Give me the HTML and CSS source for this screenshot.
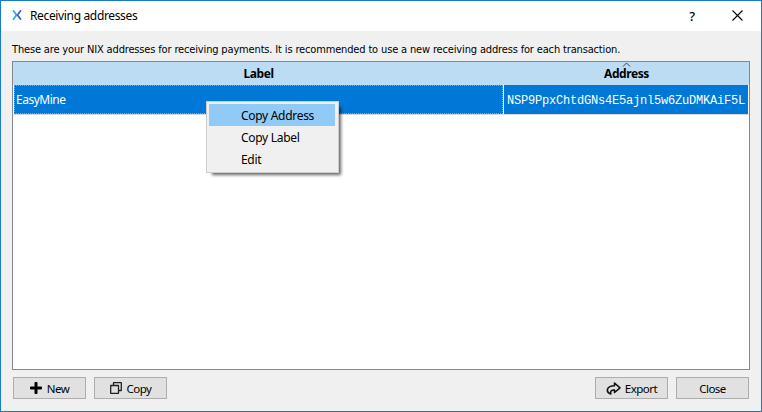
FILE: index.html
```html
<!DOCTYPE html>
<html lang="en">
<head>
<meta charset="utf-8">
<title>Receiving addresses</title>
<link rel="stylesheet" href="styles.css">
</head>
<body>
<main class="window">
  <header class="titlebar">
    <svg class="logo" width="10" height="10" viewBox="0 0 10 10" fill="none" stroke-width="1.7">
      <path d="M1 .3 4 4.2Q4.7 5 4 5.8L1 9.7" stroke="#29a4ee"/>
      <path d="M9 .3 6 4.2Q5.3 5 6 5.8L9 9.7" stroke="#4054d5"/>
    </svg>
    <h1 class="title">Receiving addresses</h1>
    <span class="help">?</span>
    <svg class="dismiss" width="11" height="11" viewBox="0 0 11 11" stroke="#000" stroke-width="1.1"><path d="M.5.5l10 10M10.500.5l-10 10"/></svg>
  </header>
  <p class="intro">These are your NIX addresses for receiving payments. It is recommended to use a new receiving address for each transaction.</p>
  <section class="table">
    <div class="head">
      <div class="col-label"><b class="head-label">Label</b></div>
      <div class="col-address">
        <svg class="sort" width="9" height="5" viewBox="0 0 9 5" fill="none" stroke="#444"><path d="M1 4.500 4.500 1 8 4.500"/></svg>
        <b class="head-address">Address</b>
      </div>
    </div>
    <div class="row">
      <div class="cell name"><span class="name-text">EasyMine</span>
        <svg class="focus" width="489" height="29" fill="none" stroke="#ff8728" stroke-dasharray="1 1"><path d="M0 .5H489"/><path d="M0 28.500H489"/><path d="M.5 0V29"/><path d="M488.500 0V29"/></svg>
      </div>
      <div class="cell address"><span class="address-text">NSP9PpxChtdGNs4E5ajnl5w6ZuDMKAiF5L</span></div>
    </div>
  </section>
  <footer class="actions">
    <button class="btn"><svg width="12" height="12" viewBox="0 0 12 12" fill="#000"><path d="M5.500 0h1q1 0 1 1v3.500H11q1 0 1 1v1q0 1-1 1H7.500V11q0 1-1 1h-1q-1 0-1-1V7.500H1q-1 0-1-1v-1q0-1 1-1h3.500V1q0-1 1-1z"/></svg><span class="t-new">New</span></button>
    <button class="btn"><svg width="12" height="12" viewBox="0 0 12 12" fill="none" stroke="#222" stroke-width="1.3" stroke-linejoin="round"><path d="M.7 3.500h7.800v7.800H.7zM3.500 3.500V.7h7.800v7.800H8.500"/></svg><span class="t-copy">Copy</span></button>
    <button class="btn export"><svg width="15" height="13" viewBox="0 0 15 13" fill="none" stroke="#111" stroke-width="1.600" stroke-linejoin="round"><path d="M8.500 1 14 5.800 8.500 10.500V8C5.500 7.800 4.300 9 4.800 12 0 10.500-.5 4 8.500 3.800z"/></svg><span class="t-export">Export</span></button>
    <button class="btn"><span class="t-close">Close</span></button>
  </footer>
  <nav class="menu">
    <div class="item active"><span class="m-address">Copy Address</span></div>
    <div class="item"><span class="m-label">Copy Label</span></div>
    <div class="item"><span class="m-edit">Edit</span></div>
  </nav>
</main>
</body>
</html>
```
FILE: styles.css
```css
* { box-sizing: border-box; }
body { margin: 0; font: 12px/16px "Noto Sans", sans-serif; color: #000; }
.window { position: relative; width: 762px; height: 412px; border: 1px solid #1979ca; background: #f0f0f0; display: flex; flex-direction: column; overflow: hidden; white-space: nowrap; }
.titlebar { height: 30px; background: #fff; display: flex; align-items: center; padding: 0 18px 2px 11px; flex: none; }
.title { font-size: 12px; font-weight: 400; margin: 2px 0 0 8px; letter-spacing: -.35px; }
.help { margin: 1px 40px 0 auto; font-size: 13px; font-weight: 500; position: relative; left: 3px; }
.intro { margin: 11px 0 0 11px; height: 19px; font-family: "DejaVu Sans Condensed", "DejaVu Sans", sans-serif; font-stretch: condensed; font-size: 11px; letter-spacing: -.155px; }
.table { margin: 0 11px; height: 309px; width: 738px; border: 1px solid #828790; background: #fff; }
.head { height: 23px; display: flex; background: #bcdcf4; text-align: center; line-height: 24px; letter-spacing: -.4px; }
.col-label { width: 491px; }
.col-address { width: 245px; position: relative; }
.sort { position: absolute; left: 118px; top: 0; }
.row { height: 30px; display: flex; padding: 0 1px; border-bottom: 1px solid #d8d8d8; }
.cell { background: #0078d7; color: #fff; line-height: 30px; }
.name { width: 489px; margin-right: 1px; padding-left: 2px; position: relative; letter-spacing: -.5px; }
.focus { position: absolute; left: 0; top: 0; }
.address { width: 244px; padding-left: 3px; font-family: "Liberation Mono", monospace; font-size: 12px; letter-spacing: -.2px; line-height: 32px; height: 29px; }
.actions { display: flex; gap: 8px; padding: 7px 12px 0; }
.btn { width: 73px; height: 22px; border: 1px solid #adadad; background: #e1e1e1; padding: 2px 0 0; font: inherit; font-size: 11.5px; display: flex; align-items: center; justify-content: center; gap: 5px; letter-spacing: -.5px; }
.btn svg { margin-top: -2px; }
.export { margin-left: auto; gap: 4px; }
.menu { position: absolute; left: 205px; top: 100px; width: 133px; height: 72px; border: 1px solid #ccc; padding: 2px 3px 2px 2px; background: #f0f0f0; box-shadow: 4px 4px 3px -2px rgba(0,0,0,.6); }
.item { height: 22px; line-height: 24px; padding-left: 32px; letter-spacing: -.3px; }
.active { background: #91c9f7; }
```
